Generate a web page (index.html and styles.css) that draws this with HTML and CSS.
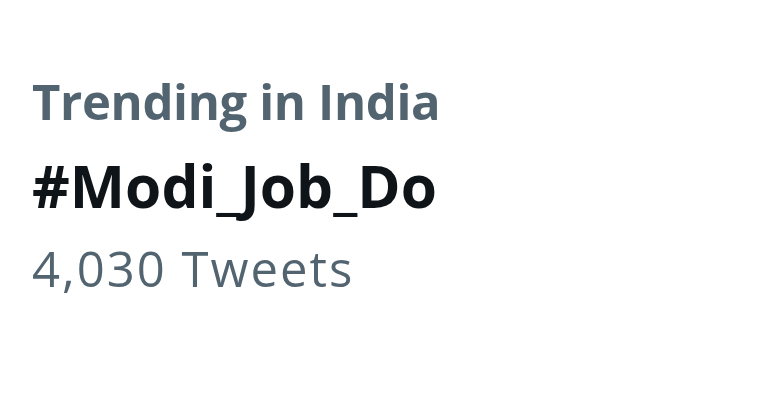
FILE: index.html
```html
<!DOCTYPE html>
<html>
<head>
<meta charset="utf-8">
<link rel="stylesheet" href="styles.css">
</head>
<body>
<div class="trend">
  <div class="context">Trending in India</div>
  <div class="tag">#Modi_Job_Do</div>
  <div class="count">4,030 Tweets</div>
</div>
</body>
</html>
```
FILE: styles.css
```css
html, body {
  margin: 0;
  padding: 0;
  background: #ffffff;
}
.trend {
  padding: 72px 0 0 32px;
  display: flex;
  flex-direction: column;
}
.context {
  font-family: "Open Sans", "Noto Sans", sans-serif;
  font-weight: 700;
  font-size: 49px;
  line-height: 59px;
  letter-spacing: -0.35px;
  color: #536471;
}
.tag {
  margin-top: 19px;
  font-family: "Open Sans", "Noto Sans", sans-serif;
  font-weight: 700;
  font-size: 58.6px;
  line-height: 70px;
  color: #0f1419;
}
.count {
  margin-top: 19px;
  font-family: "Open Sans", "Noto Sans", sans-serif;
  font-weight: 400;
  font-size: 49px;
  line-height: 59px;
  letter-spacing: 2px;
  color: #536471;
}
```
